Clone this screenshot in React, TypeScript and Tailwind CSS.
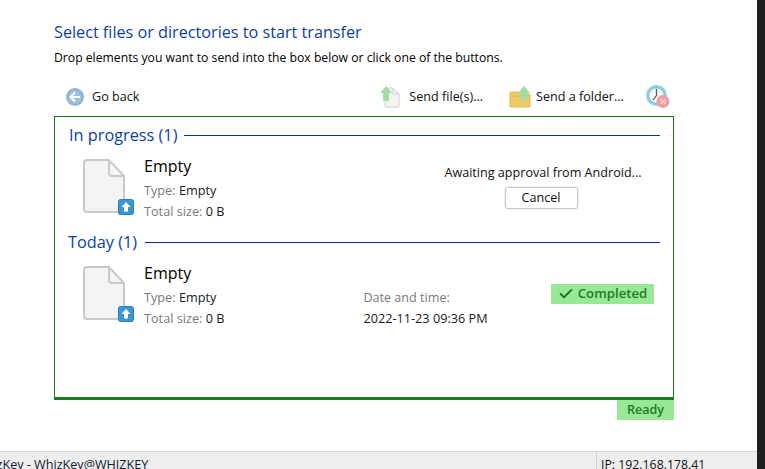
import React from 'react';
import { Check } from 'lucide-react';

const FONT = "font-['Open_Sans','Noto_Sans',sans-serif]";

function DocIcon() {
  return (
    <div className="relative w-[46px] h-[56px] mt-px">
      <svg width="42" height="54" viewBox="0 0 42 54" className="absolute left-0 top-0">
        <path d="M4 1 H26 L41 17 V50 a3 3 0 0 1 -3 3 H4 a3 3 0 0 1 -3 -3 V4 a3 3 0 0 1 3 -3 Z" fill="#f4f4f2" stroke="#c9c9c9" strokeWidth="2" />
        <path d="M26 1 V14 a3 3 0 0 0 3 3 H41" fill="none" stroke="#c9c9c9" strokeWidth="2" />
      </svg>
      <div className="absolute left-[35px] top-[40px]">
        <svg width="16" height="16" viewBox="0 0 16 16">
          <rect x="0.5" y="0.5" width="15" height="15" rx="2" fill="#3b97d3" stroke="#2a7fb8" />
          <path d="M8 3 L12.5 8 H10 V12.5 H6 V8 H3.5 Z" fill="#ffffff" />
        </svg>
      </div>
    </div>
  );
}

function BackIcon() {
  return (
    <svg width="18" height="18" viewBox="0 0 18 18">
      <circle cx="9" cy="9" r="9" fill="#8fb4d2" />
      <circle cx="9" cy="9" r="7" fill="#9dbfda" />
      <path d="M9 4.5 L4.5 9 L9 13.5 M4.5 9 H14" fill="none" stroke="#ffffff" strokeWidth="2" />
    </svg>
  );
}

function SendFileIcon() {
  return (
    <svg width="20" height="22" viewBox="0 0 20 22">
      <path d="M5 2 H13 L19 8 V20 a1 1 0 0 1 -1 1 H6 a1 1 0 0 1 -1 -1 Z" fill="#f4f4f2" stroke="#cfcfcf" />
      <path d="M13 2 V8 H19" fill="none" stroke="#cfcfcf" />
      <path d="M6 0 L12 7 H9 V15 H3 V7 H0 Z" fill="#9fdfa6" />
    </svg>
  );
}

function SendFolderIcon() {
  return (
    <svg width="22" height="22" viewBox="0 0 22 22">
      <path d="M1 7 a1 1 0 0 1 1 -1 H9 L11 8 H20 a1 1 0 0 1 1 1 V20 a1 1 0 0 1 -1 1 H2 a1 1 0 0 1 -1 -1 Z" fill="#eccb68" stroke="#dfb94f" />
      <path d="M1 10 H21" stroke="#dcb850" />
      <path d="M15 0 L21 7 H18 V14 H12 V7 H9 Z" fill="#9fdfa6" />
    </svg>
  );
}

function ClockCancelIcon() {
  return (
    <svg width="24" height="24" viewBox="0 0 24 24">
      <circle cx="10.5" cy="10.5" r="10.5" fill="#8dd0e0" />
      <circle cx="10.5" cy="10.5" r="7.5" fill="#f5f5f5" stroke="#6fa8b8" strokeWidth="0.5" />
      <path d="M10.5 4 V10.5 L7 15" fill="none" stroke="#555555" strokeWidth="1.2" />
      <circle cx="17" cy="16.5" r="6.5" fill="#f29ca3" />
      <path d="M14.5 14 L19.5 19 M19.5 14 L14.5 19" stroke="#fbe3e4" strokeWidth="1.2" />
    </svg>
  );
}

function SectionHeading({ label, className }: { label: string; className: string }) {
  return (
    <div className="flex items-center h-[20px]">
      <span className={`text-[16.3px] leading-[20px] text-[#0b3fa6] whitespace-nowrap ${className}`}>{label}</span>
      <div className="flex-1 h-px bg-[#003399]" />
    </div>
  );
}

function Meta({ label, value }: { label: string; value: string }) {
  return (
    <div className="text-[12.7px] leading-[21px] whitespace-nowrap">
      <span className="text-[#7a7a7a]">{label}</span> <span className="text-[#1a1a1a]">{value}</span>
    </div>
  );
}

function FileSummary() {
  return (
    <div className="flex">
      <DocIcon />
      <div className="ml-[15px] -mt-[3px]">
        <div className="text-[16px] leading-[22px] text-black mb-[3px]">Empty</div>
        <Meta label="Type:" value="Empty" />
        <Meta label="Total size:" value="0 B" />
      </div>
    </div>
  );
}

export default function App() {
  return (
    <div className={`${FONT} w-[765px] h-[469px] overflow-hidden flex bg-white`}>
      <div className="w-[757px] h-full flex flex-col">
        <div className="flex-1 pl-[54px] flex flex-col">
          <h1 className="mt-[21px] text-[16.2px] leading-[22px] font-normal text-[#0b3fa6] whitespace-nowrap">
            Select files or directories to start transfer
          </h1>
          <p className="mt-[6px] text-[12.2px] leading-[18px] text-black whitespace-nowrap">
            Drop elements you want to send into the box below or click one of the buttons.
          </p>

          <div className="w-[620px] h-[32px] mt-[14px] flex items-center pl-[12px] text-[12.6px] text-[#111111]">
            <BackIcon />
            <span className="ml-[8px]">Go back</span>
            <div className="ml-[241px]"><SendFileIcon /></div>
            <span className="ml-[9px] whitespace-nowrap">Send file(s)...</span>
            <div className="ml-[26px]"><SendFolderIcon /></div>
            <span className="ml-[5px] whitespace-nowrap">Send a folder...</span>
            <div className="ml-[22px]"><ClockCancelIcon /></div>
          </div>

          <div className="w-[620px] h-[284px] mt-[3px] border border-b-[3px] border-[#1e7a1e] pl-[14px] pr-[13px] pt-[8px]">
            <SectionHeading label="In progress (1)" className="mr-[7px]" />
            <div className="flex justify-between pl-[14px] mt-[13px] h-[69px]">
              <FileSummary />
              <div className="w-[200px] mt-[5px] mr-[18px] flex flex-col items-center">
                <div className="ml-[2px] text-[12.6px] leading-[20px] text-[#111111] whitespace-nowrap">Awaiting approval from Android...</div>
                <button className="mt-[4px] mr-[2px] w-[73px] h-[22px] rounded-[3px] border border-[#c8c8c8] bg-white shadow-[0_0_0_1px_#f0f0f0] text-[12.6px] leading-none text-[#111111]">
                  Cancel
                </button>
              </div>
            </div>
            <div className="mt-[5px]">
              <SectionHeading label="Today (1)" className="-ml-px mr-[8px]" />
            </div>
            <div className="flex pl-[14px] mt-[13px]">
              <FileSummary />
              <div className="ml-[139px] mt-[22px]">
                <div className="text-[12.6px] leading-[21px] text-[#7a7a7a]">Date and time:</div>
                <div className="text-[12.7px] leading-[21px] text-[#1a1a1a] whitespace-nowrap">2022-11-23 09:36 PM</div>
              </div>
              <div className="ml-auto mr-[6px] mt-[19px] w-[103px] h-[20px] bg-[#98e898] flex items-center justify-center gap-[4px] text-[#1f7a1f] text-[13.2px] font-semibold">
                <Check size={16} strokeWidth={3} />
                <span>Completed</span>
              </div>
            </div>
          </div>

          <div className="w-[620px] flex justify-end">
            <div className="w-[57px] h-[20px] bg-[#98e898] flex items-center justify-center text-[12.6px] font-semibold text-[#1f7a1f]">
              Ready
            </div>
          </div>
        </div>

        <div className="h-[18px] shrink-0 bg-[#eeeeee] border-t border-[#d4d4d4] flex overflow-hidden">
          <div className="w-[597px] shrink-0 overflow-hidden border-r border-[#d4d4d4]">
            <div className="-ml-[26px] text-[12.6px] leading-[26px] text-[#111a33] whitespace-nowrap">WhizKey - WhizKey@WHIZKEY</div>
          </div>
          <div className="pl-[4px] text-[12.3px] leading-[26px] text-[#111111] whitespace-nowrap">IP: 192.168.178.41</div>
        </div>
      </div>
      <div className="w-[8px] h-full bg-[#1f1f1f]" />
    </div>
  );
}
